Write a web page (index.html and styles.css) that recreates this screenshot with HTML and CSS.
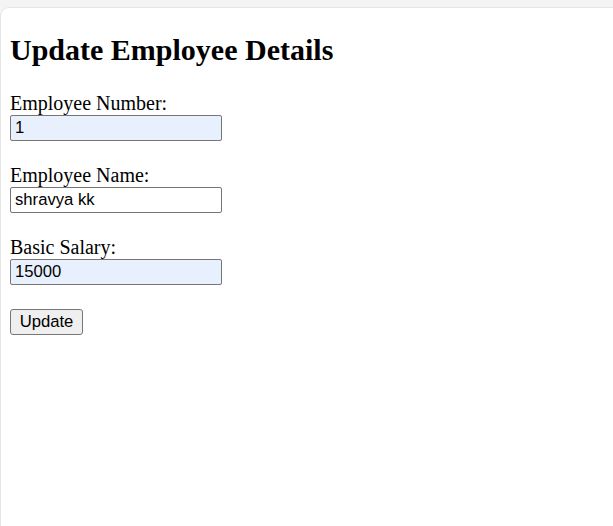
FILE: index.html
```html
<!DOCTYPE html>
<html>
<head>
<meta charset="utf-8">
<title>Update Employee Details</title>
<link rel="stylesheet" href="styles.css">
</head>
<body>
<div class="panel">
  <h2 class="title">Update Employee Details</h2>
  <form class="form">
    <label class="label">Employee Number:</label><br>
    <input class="field autofill" type="text" value="1"><br><br>
    <label class="label">Employee Name:</label><br>
    <input class="field" type="text" value="shravya kk"><br><br>
    <label class="label">Basic Salary:</label><br>
    <input class="field autofill" type="text" value="15000"><br><br>
    <button class="btn" type="button">Update</button>
  </form>
</div>
</body>
</html>
```

FILE: styles.css
```css
html, body {
  margin: 0;
  height: 100%;
}
body {
  background: #f4f4f4;
  font-family: "Liberation Serif", "Times New Roman", serif;
  font-size: 20px;
  color: #000;
}
.panel {
  box-sizing: border-box;
  margin-top: 7px;
  height: calc(100% - 7px);
  background: #fff;
  border-top: 1px solid #e6e6e6;
  border-left: 1px solid #e6e6e6;
  border-top-left-radius: 9px;
  padding: 0 9px 10px 9px;
  overflow: hidden;
}
.title {
  font-size: 30px;
  font-weight: bold;
  margin: 25px 0 25px 0;
}
.form {
  margin: 0;
  line-height: 23.1px;
}
.field {
  box-sizing: border-box;
  width: 212px;
  height: 26px;
  margin: 0;
  padding: 1px 4px;
  font-family: "Liberation Sans", Arial, sans-serif;
  font-size: 16.67px;
  color: #000;
  background: #fff;
  border: 1px solid #767676;
  border-radius: 2px;
}
.field.autofill {
  background: #e8f0fe;
}
.btn {
  box-sizing: border-box;
  height: 26px;
  width: 73px;
  margin: 0;
  padding: 1px 8px;
  font-family: "Liberation Sans", Arial, sans-serif;
  font-size: 16.67px;
  color: #000;
  background: #efefef;
  border: 1px solid #767676;
  border-radius: 3px;
}
```
